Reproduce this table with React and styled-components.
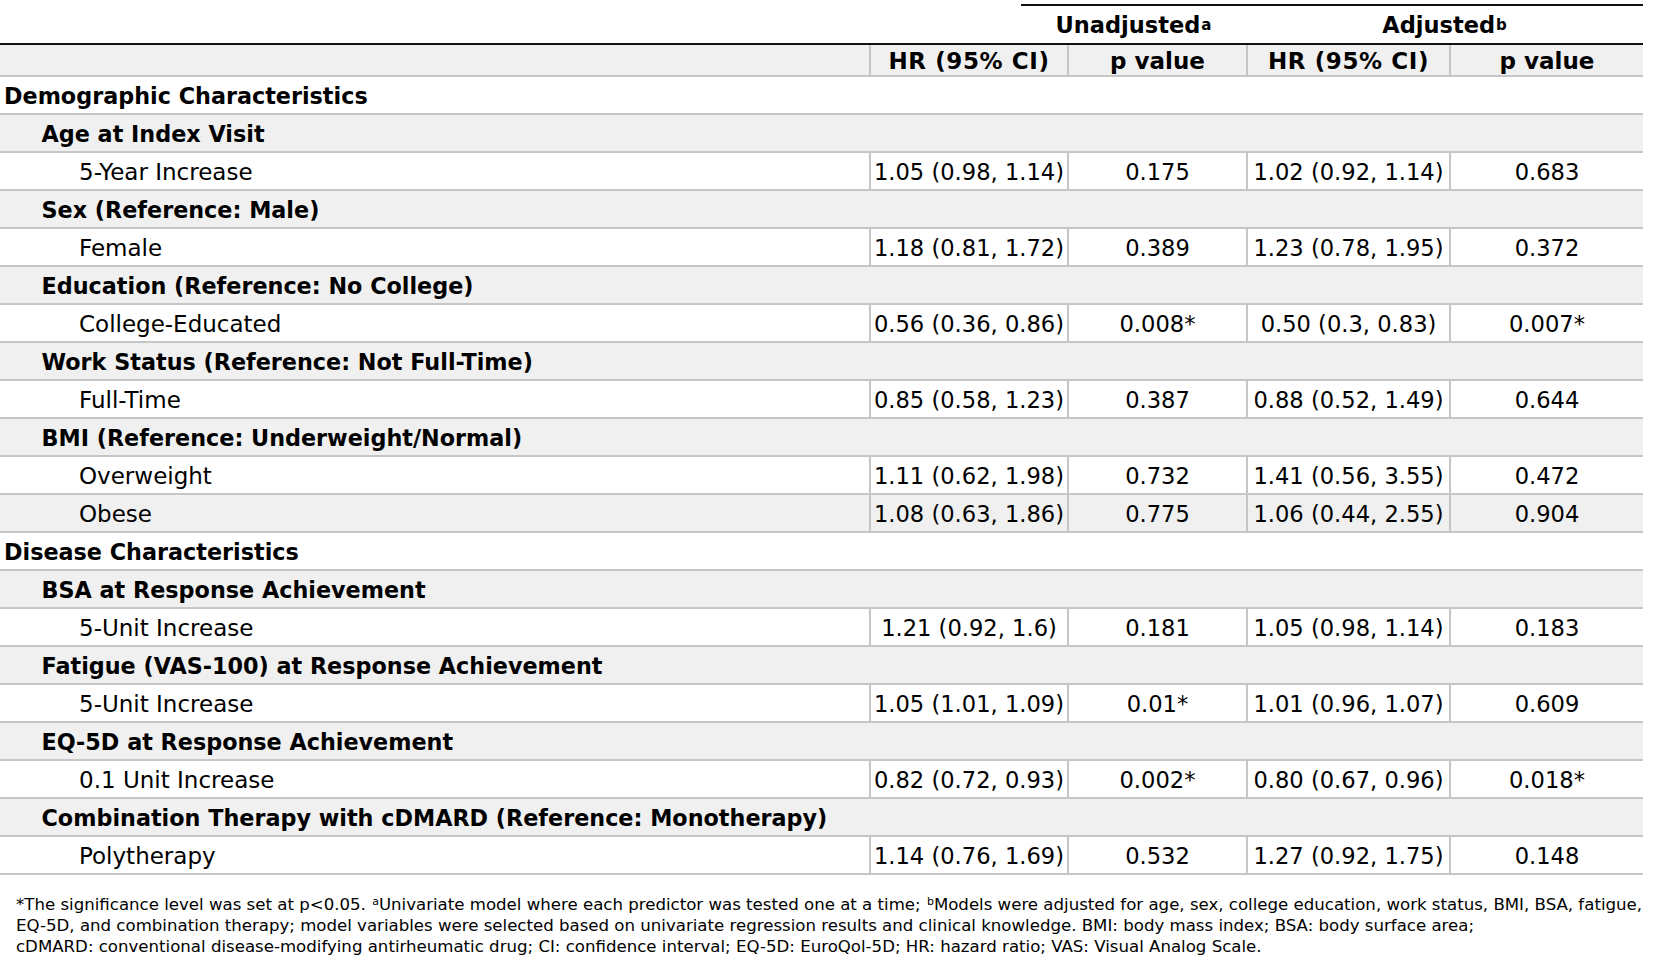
import React from "react";
import styled, { createGlobalStyle } from "styled-components";

const GlobalStyle = createGlobalStyle`
  html, body { margin: 0; padding: 0; background: #ffffff; }
  body {
    font-family: "DejaVu Sans", "Liberation Sans", sans-serif;
    color: #000;
  }
`;

const COLS = "869px 198px 179px 203px 194px";
const LINE = "#c6c6c6";
const SHADE = "#f0f0f0";

const Page = styled.div`
  width: 1643px;
`;

const SpanRow = styled.div`
  display: grid;
  grid-template-columns: 1021px 225px 397px;
  padding-top: 4px;
`;

const SpanCell = styled.div`
  border-top: ${(p) => (p.$empty ? "none" : "2px solid #111")};
  height: 37px;
  display: flex;
  align-items: center;
  justify-content: center;
  font-weight: bold;
  font-size: 22.5px;
`;

const Sup = styled.sup`
  font-size: ${(p) => p.$size}px;
  line-height: 0;
  vertical-align: ${(p) => p.$raise}px;
  margin-left: 1px;
`;

const HeaderRow = styled.div`
  display: grid;
  grid-template-columns: ${COLS};
  border-top: 2px solid #111;
  border-bottom: 2px solid ${LINE};
  background: ${SHADE};
  height: 30px;
`;

const HeadCell = styled.div`
  display: flex;
  align-items: center;
  justify-content: center;
  padding-top: 1px;
  font-weight: bold;
  font-size: 23px;
  letter-spacing: ${(p) => (p.$wide ? "0.6px" : "0")};
  border-left: ${(p) => (p.$first ? "none" : `2px solid ${LINE}`)};
`;

const Row = styled.div`
  display: grid;
  grid-template-columns: ${(p) => (p.$group ? "1fr" : COLS)};
  height: 36px;
  border-bottom: 2px solid ${LINE};
  background: ${(p) => (p.$shade ? SHADE : "#fff")};
`;

const Label = styled.div`
  display: flex;
  align-items: center;
  padding-top: 1px;
  padding-left: ${(p) => 4 + p.$level * 37.5}px;
  font-size: ${(p) => (p.$bold ? 22.3 : 23)}px;
  font-weight: ${(p) => (p.$bold ? "bold" : "normal")};
  white-space: nowrap;
`;

const Value = styled.div`
  display: flex;
  align-items: center;
  justify-content: center;
  padding-top: 1px;
  font-size: 22.6px;
  border-left: 2px solid ${LINE};
  white-space: nowrap;
`;

const Notes = styled.div`
  padding: 19px 0 0 16px;
  font-size: 16.6px;
  line-height: 21px;
`;

const NoteLine = styled.div`
  white-space: nowrap;
`;

const rows = [
  { label: "Demographic Characteristics", level: 0 },
  { label: "Age at Index Visit", level: 1 },
  { label: "5-Year Increase", level: 2, v: ["1.05 (0.98, 1.14)", "0.175", "1.02 (0.92, 1.14)", "0.683"] },
  { label: "Sex (Reference: Male)", level: 1 },
  { label: "Female", level: 2, v: ["1.18 (0.81, 1.72)", "0.389", "1.23 (0.78, 1.95)", "0.372"] },
  { label: "Education (Reference: No College)", level: 1 },
  { label: "College-Educated", level: 2, v: ["0.56 (0.36, 0.86)", "0.008*", "0.50 (0.3, 0.83)", "0.007*"] },
  { label: "Work Status (Reference: Not Full-Time)", level: 1 },
  { label: "Full-Time", level: 2, v: ["0.85 (0.58, 1.23)", "0.387", "0.88 (0.52, 1.49)", "0.644"] },
  { label: "BMI (Reference: Underweight/Normal)", level: 1 },
  { label: "Overweight", level: 2, v: ["1.11 (0.62, 1.98)", "0.732", "1.41 (0.56, 3.55)", "0.472"] },
  { label: "Obese", level: 2, v: ["1.08 (0.63, 1.86)", "0.775", "1.06 (0.44, 2.55)", "0.904"] },
  { label: "Disease Characteristics", level: 0 },
  { label: "BSA at Response Achievement", level: 1 },
  { label: "5-Unit Increase", level: 2, v: ["1.21 (0.92, 1.6)", "0.181", "1.05 (0.98, 1.14)", "0.183"] },
  { label: "Fatigue (VAS-100) at Response Achievement", level: 1 },
  { label: "5-Unit Increase", level: 2, v: ["1.05 (1.01, 1.09)", "0.01*", "1.01 (0.96, 1.07)", "0.609"] },
  { label: "EQ-5D at Response Achievement", level: 1 },
  { label: "0.1 Unit Increase", level: 2, v: ["0.82 (0.72, 0.93)", "0.002*", "0.80 (0.67, 0.96)", "0.018*"] },
  { label: "Combination Therapy with cDMARD (Reference: Monotherapy)", level: 1 },
  { label: "Polytherapy", level: 2, v: ["1.14 (0.76, 1.69)", "0.532", "1.27 (0.92, 1.75)", "0.148"] },
];

export default function App() {
  return (
    <Page>
      <GlobalStyle />
      <SpanRow>
        <SpanCell $empty />
        <SpanCell>
          Unadjusted<Sup $size={15} $raise={8}>a</Sup>
        </SpanCell>
        <SpanCell>
          Adjusted<Sup $size={15} $raise={8}>b</Sup>
        </SpanCell>
      </SpanRow>
      <HeaderRow>
        <HeadCell $first />
        <HeadCell $wide>HR (95% CI)</HeadCell>
        <HeadCell>p value</HeadCell>
        <HeadCell $wide>HR (95% CI)</HeadCell>
        <HeadCell>p value</HeadCell>
      </HeaderRow>
      {rows.map((r, i) => (
        <Row key={i} $group={!r.v} $shade={i % 2 === 1}>
          <Label $level={r.level} $bold={r.level < 2}>
            {r.label}
          </Label>
          {r.v && r.v.map((x, j) => <Value key={j}>{x}</Value>)}
        </Row>
      ))}
      <Notes>
        <NoteLine>
          *The significance level was set at p&lt;0.05. <Sup $size={11} $raise={5}>a</Sup>Univariate model where each predictor was tested one at a time; <Sup $size={11} $raise={5}>b</Sup>Models were adjusted for age, sex, college education, work status, BMI, BSA, fatigue,
        </NoteLine>
        <NoteLine>
          EQ-5D, and combination therapy; model variables were selected based on univariate regression results and clinical knowledge. BMI: body mass index; BSA: body surface area;
        </NoteLine>
        <NoteLine>
          cDMARD: conventional disease-modifying antirheumatic drug; CI: confidence interval; EQ-5D: EuroQol-5D; HR: hazard ratio; VAS: Visual Analog Scale.
        </NoteLine>
      </Notes>
    </Page>
  );
}
